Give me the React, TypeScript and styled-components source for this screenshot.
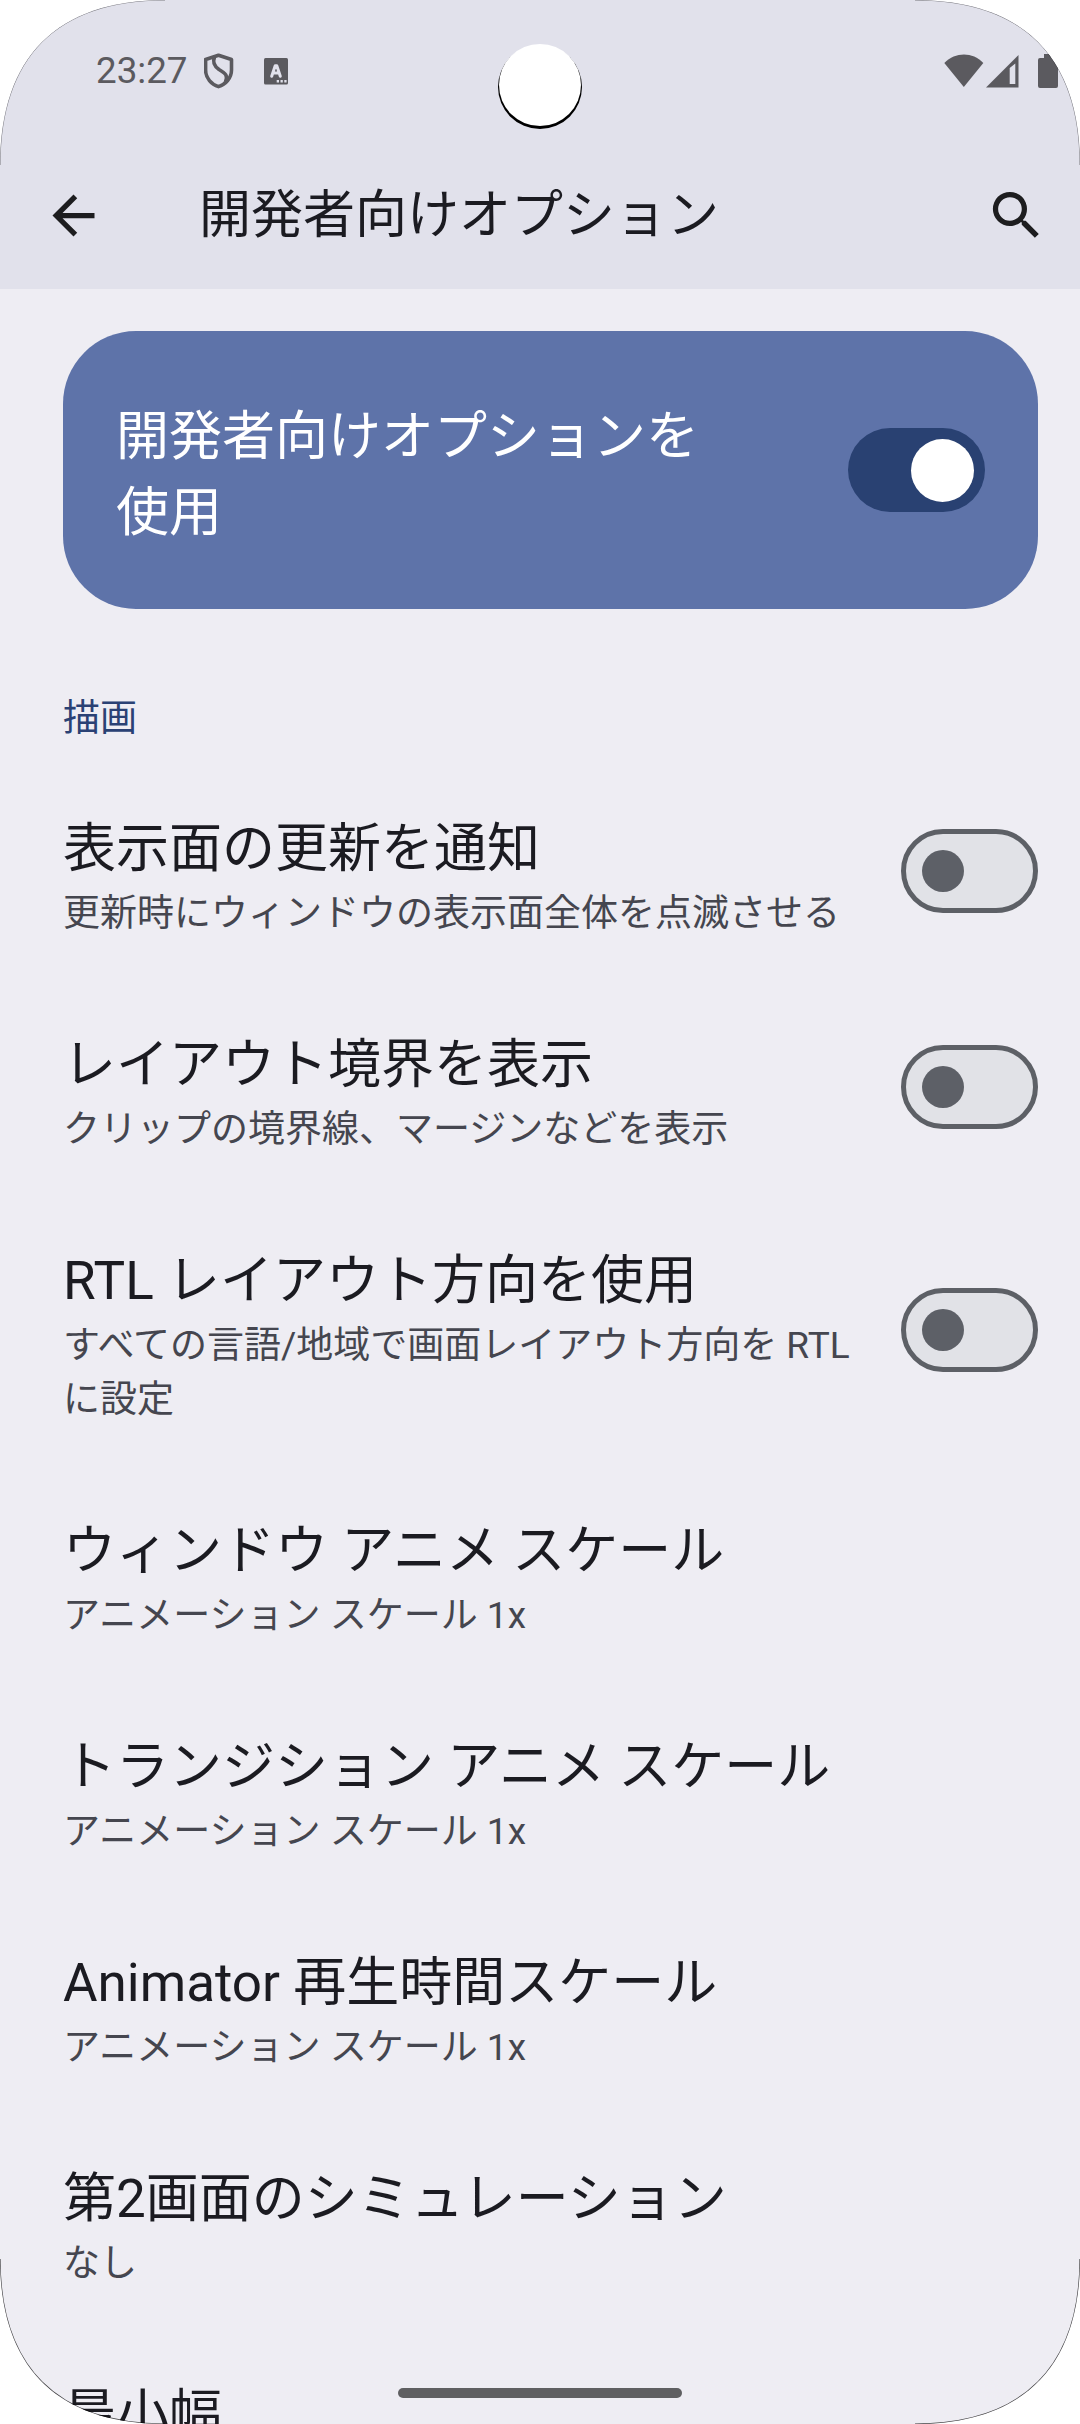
import React from "react";
import styled, { createGlobalStyle } from "styled-components";

const GlobalStyle = createGlobalStyle`
  * { box-sizing: border-box; }
  body { margin: 0; background: #fff; }
`;

const OUTLINE =
  "M0 165C0 57 57 0 165 0H915C1023 0 1080 57 1080 165V2259C1080 2367 1023 2424 915 2424H165C57 2424 0 2367 0 2259Z";

const Screen = styled.div`
  position: relative;
  width: 1080px;
  height: 2424px;
  overflow: hidden;
  background: #eeedf3;
  color: #1b1b21;
  font-family: Roboto, "Noto Sans CJK JP", sans-serif;
  clip-path: path("${OUTLINE}");
`;

const Header = styled.header`
  height: 289px;
  background: #e1e1eb;
`;

const StatusBar = styled.div`
  height: 142px;
  padding: 0 22px 0 96px;
  display: flex;
  align-items: center;
  color: #5b5a5f;
`;

const Clock = styled.span`
  font-size: 36.75px;
  line-height: 44px;
  width: 92px;
  margin-right: 16px;
  padding-bottom: 1px;
`;

const StatusIcon = styled.svg<{ $w: number; $h: number; $gap?: number }>`
  display: block;
  flex: none;
  width: ${(p) => p.$w}px;
  height: ${(p) => p.$h}px;
  margin-right: ${(p) => p.$gap ?? 0}px;
`;

const Spacer = styled.div`
  flex: 1;
`;

const Toolbar = styled.div`
  height: 147px;
  padding: 0 32px 0 42px;
  display: flex;
  align-items: center;
`;

const ActionIcon = styled.svg`
  display: block;
  flex: none;
  width: 63px;
  height: 63px;
  fill: #1d1d1f;
`;

const AppTitle = styled.h1`
  flex: 1;
  margin: 0;
  padding: 0 0 0 94px;
  font-size: 52px;
  font-weight: 400;
  line-height: 76px;
`;

const Camera = styled.div`
  position: absolute;
  left: 497.5px;
  top: 44.5px;
  width: 84px;
  height: 84px;
  border-radius: 50%;
  background: #000;
  &::after {
    content: "";
    position: absolute;
    left: 1.6px;
    top: -0.5px;
    width: 82px;
    height: 82px;
    border-radius: 50%;
    background: #fff;
  }
`;

const MainCard = styled.section`
  margin: 42px 42px 0 63px;
  height: 278px;
  padding: 0 53px;
  display: flex;
  align-items: center;
  justify-content: space-between;
  border-radius: 73px;
  background: #5e73a9;
  color: #fff;
`;

const MainLabel = styled.div`
  width: 610px;
  padding-top: 9px;
  font-size: 53px;
  line-height: 76px;
`;

const Category = styled.h2`
  margin: 0;
  height: 154px;
  padding: 83px 63px 0;
  font-size: 37px;
  font-weight: 400;
  line-height: 54px;
  color: #2a4174;
`;

const Row = styled.div`
  display: flex;
  align-items: center;
  justify-content: space-between;
  padding: 0 42px 0 63px;
`;

const RowText = styled.div`
  flex: 1;
  padding: 48px 40px 38px 0;
`;

const Title = styled.div`
  font-size: 53px;
  line-height: 76px;
  white-space: nowrap;
`;

const Summary = styled.div`
  font-size: 37px;
  line-height: 54px;
  color: #45464f;
`;

const Track = styled.div<{ $on?: boolean }>`
  flex: none;
  width: 137px;
  height: 84px;
  display: flex;
  align-items: center;
  justify-content: ${(p) => (p.$on ? "flex-end" : "flex-start")};
  padding: ${(p) => (p.$on ? "0 10.6px" : "0 16px")};
  border-radius: 42px;
  border: ${(p) => (p.$on ? "none" : "5px solid #5d6066")};
  background: ${(p) => (p.$on ? "#294172" : "#e1e2e7")};
`;

const Thumb = styled.div<{ $on?: boolean }>`
  width: ${(p) => (p.$on ? 63 : 42)}px;
  height: ${(p) => (p.$on ? 63 : 42)}px;
  border-radius: 50%;
  background: ${(p) => (p.$on ? "#fff" : "#5d6067")};
`;

const HomeHandle = styled.div`
  position: absolute;
  left: 398px;
  top: 2388px;
  width: 284px;
  height: 10px;
  border-radius: 5px;
  background: #5f5f61;
`;

const Edge = styled.svg`
  position: absolute;
  inset: 0;
  width: 1080px;
  height: 2424px;
  pointer-events: none;
`;

const Switch = ({ on }: { on?: boolean }) => (
  <Track $on={on} role="switch" aria-checked={!!on}>
    <Thumb $on={on} />
  </Track>
);

type Item = { title: string; summary?: string; toggle?: boolean };

const items: Item[] = [
  { title: "表示面の更新を通知", summary: "更新時にウィンドウの表示面全体を点滅させる", toggle: true },
  { title: "レイアウト境界を表示", summary: "クリップの境界線、マージンなどを表示", toggle: true },
  { title: "RTL レイアウト方向を使用", summary: "すべての言語/地域で画面レイアウト方向を RTL に設定", toggle: true },
  { title: "ウィンドウ アニメ スケール", summary: "アニメーション スケール 1x" },
  { title: "トランジション アニメ スケール", summary: "アニメーション スケール 1x" },
  { title: "Animator 再生時間スケール", summary: "アニメーション スケール 1x" },
  { title: "第2画面のシミュレーション", summary: "なし" },
  { title: "最小幅" },
];

export default function App() {
  return (
    <>
      <GlobalStyle />
      <Screen lang="ja">
        <Header>
          <StatusBar>
            <Clock>23:27</Clock>
            <StatusIcon $w={30} $h={36} $gap={30} viewBox="0 0 30 36" fill="none" stroke="currentColor" strokeWidth="3.6" strokeLinejoin="round">
              <path d="M14.500 2.200 27.500 6.500V17C27.500 25 21.500 31.500 14.500 33.600 7.500 31.500 1.600 25 1.600 17V6.500Z" />
              <path d="M10.500 4C8.500 9 10 13 15 16.500 22 20.500 24 22.500 21.500 29" />
            </StatusIcon>
            <StatusIcon $w={24} $h={27} viewBox="0 0 24 27">
              <rect width="24" height="26.500" rx="1.500" fill="currentColor" />
              <path d="M7.700 18.300 11.200 7.800H12.800L16.300 18.300M9 15H15" fill="none" stroke="#e1e1eb" strokeWidth="3" strokeLinecap="round" strokeLinejoin="round" />
              <path d="M12.700 22.100H15V24.400H12.700ZM16.500 22.100H18.800V24.400H16.500ZM20.300 22.100H22.600V24.400H20.300Z" fill="#e1e1eb" />
            </StatusIcon>
            <Spacer />
            <StatusIcon $w={40} $h={34} $gap={2} viewBox="0 0 40 34">
              <path d="M0.300 9C11.500-2.300 28.500-2.300 39.300 9L19.800 33Z" fill="currentColor" />
            </StatusIcon>
            <StatusIcon $w={33} $h={34} $gap={19} viewBox="0 0 33 34">
              <path fillRule="evenodd" d="M0 33.500 32.500 1V33.500ZM23.700 14V30H29.300V9.500Z" fill="currentColor" />
            </StatusIcon>
            <StatusIcon $w={20} $h={34} viewBox="0 0 20 34">
              <path d="M6 0H14V4H18Q20 4 20 6V32Q20 34 18 34H2Q0 34 0 32V6Q0 4 2 4H6Z" fill="currentColor" />
            </StatusIcon>
          </StatusBar>
          <Toolbar>
            <ActionIcon viewBox="0 0 24 24">
              <path d="M20 11H7.830l5.590-5.590L12 4l-8 8 8 8 1.410-1.410L7.830 13H20v-2z" />
            </ActionIcon>
            <AppTitle>開発者向けオプション</AppTitle>
            <ActionIcon viewBox="0 0 24 24">
              <path d="M15.500 14h-.79l-.28-.27A6.471 6.471 0 0 0 16 9.500 6.500 6.500 0 1 0 9.500 16c1.610 0 3.090-.59 4.230-1.570l.27.28v.79l5 4.990L20.490 19l-4.990-5zm-6 0C7.010 14 5 11.990 5 9.500S7.010 5 9.500 5 14 7.010 14 9.500 11.990 14 9.500 14z" />
            </ActionIcon>
          </Toolbar>
        </Header>
        <MainCard>
          <MainLabel>開発者向けオプションを使用</MainLabel>
          <Switch on />
        </MainCard>
        <Category>描画</Category>
        {items.map((item) => (
          <Row key={item.title}>
            <RowText>
              <Title>{item.title}</Title>
              {item.summary && <Summary>{item.summary}</Summary>}
            </RowText>
            {item.toggle && <Switch />}
          </Row>
        ))}
        <HomeHandle />
        <Camera />
        <Edge viewBox="0 0 1080 2424" fill="none" stroke="#000">
          <path d="M0 165C0 57 57 0 165 0M915 0C1023 0 1080 57 1080 165" strokeOpacity="0.45" strokeWidth="1" />
          <path d="M1080 2259C1080 2367 1023 2424 915 2424M165 2424C57 2424 0 2367 0 2259" strokeOpacity="0.7" strokeWidth="1.200" />
        </Edge>
      </Screen>
    </>
  );
}
